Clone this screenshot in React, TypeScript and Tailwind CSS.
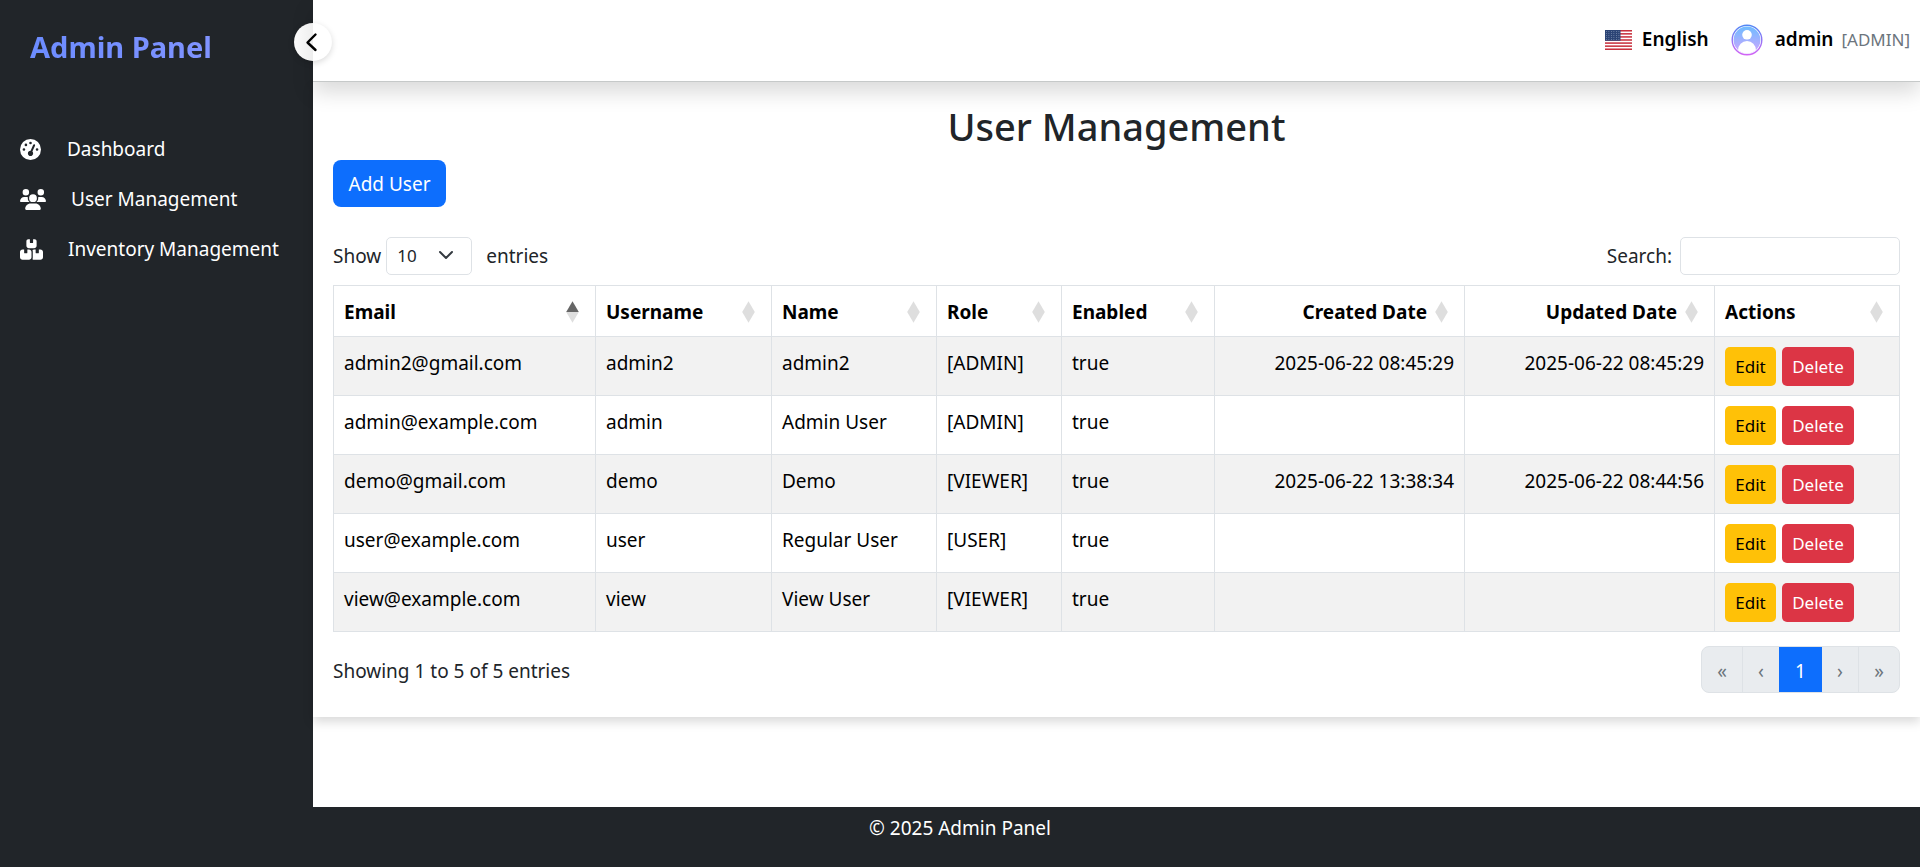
import { useState } from "react";
import { FaGaugeHigh, FaUsers, FaBoxesStacked } from "react-icons/fa6";

// ─── Types & data ───────────────────────────────────────────────────────────
interface User {
  email: string;
  username: string;
  name: string;
  role: string;
  enabled: boolean;
  created: string;
  updated: string;
}

const USERS: User[] = [
  { email: "admin2@gmail.com", username: "admin2", name: "admin2", role: "ADMIN", enabled: true, created: "2025-06-22 08:45:29", updated: "2025-06-22 08:45:29" },
  { email: "admin@example.com", username: "admin", name: "Admin User", role: "ADMIN", enabled: true, created: "", updated: "" },
  { email: "demo@gmail.com", username: "demo", name: "Demo", role: "VIEWER", enabled: true, created: "2025-06-22 13:38:34", updated: "2025-06-22 08:44:56" },
  { email: "user@example.com", username: "user", name: "Regular User", role: "USER", enabled: true, created: "", updated: "" },
  { email: "view@example.com", username: "view", name: "View User", role: "VIEWER", enabled: true, created: "", updated: "" },
];

const COLUMNS = [
  { label: "Email", width: "w-[262px]" },
  { label: "Username", width: "w-[176px]" },
  { label: "Name", width: "w-[165px]" },
  { label: "Role", width: "w-[125px]" },
  { label: "Enabled", width: "w-[153px]" },
  { label: "Created Date", width: "w-[250px]", right: true },
  { label: "Updated Date", width: "w-[250px]", right: true },
  { label: "Actions", width: "w-[185px]" },
];

// ─── Drawings ───────────────────────────────────────────────────────────────
function UsFlag() {
  return (
    <svg viewBox="0 0 27 20" className="h-5 w-[27px]" aria-hidden="true">
      <rect width="27" height="20" fill="#fff" />
      {[0, 1, 2, 3, 4, 5, 6].map((i) => (
        <rect key={i} y={(i * 40) / 13} width="27" height={20 / 13} fill="#c8313e" />
      ))}
      <rect width="15.5" height="10.77" fill="#2b4475" />
      {[0, 1, 2, 3, 4].map((r) =>
        [0, 1, 2, 3, 4, 5].map((c) => (
          <circle key={`${r}-${c}`} cx={1.4 + c * 2.5} cy={1.4 + r * 2} r="0.45" fill="#b4c1d8" />
        )),
      )}
    </svg>
  );
}

function Avatar() {
  return (
    <svg viewBox="0 0 32 32" className="size-8" aria-hidden="true">
      <defs>
        <linearGradient id="ring" x1="0" y1="0" x2="0" y2="1">
          <stop offset="0" stopColor="#5187f5" />
          <stop offset="1" stopColor="#d264f5" />
        </linearGradient>
        <linearGradient id="fill" x1="0" y1="0" x2="0" y2="1">
          <stop offset="0" stopColor="#6fbcff" />
          <stop offset="1" stopColor="#d0a5ff" />
        </linearGradient>
        <clipPath id="disc">
          <circle cx="16" cy="16" r="13.4" />
        </clipPath>
      </defs>
      <circle cx="16" cy="16" r="14.8" fill="#fff" stroke="url(#ring)" strokeWidth="1.4" />
      <circle cx="16" cy="16" r="13.4" fill="url(#fill)" />
      <g clipPath="url(#disc)" fill="#fff">
        <circle cx="16" cy="10.8" r="4.8" />
        <path d="M7 32v-5.5a9 9.5 0 0 1 18 0v5.5z" />
      </g>
    </svg>
  );
}

function SortIcon({ active }: { active?: boolean }) {
  return (
    <svg viewBox="0 0 13 22" className="h-[22px] w-[13px] shrink-0" aria-hidden="true">
      <path d="M0.2 11L6.5 0.2L12.8 11z" fill={active ? "#666" : "#dedede"} />
      <path d="M0.2 11L6.5 21.8L12.8 11z" fill="#dedede" />
    </svg>
  );
}

// ─── Layout parts ───────────────────────────────────────────────────────────
function Sidebar() {
  const link = "flex h-[50px] items-center px-5 text-white";
  return (
    <aside className="w-[313px] shrink-0 bg-[#212529]">
      <div className="px-[30px] pt-[26px] pb-14">
        <span className="inline-block bg-linear-to-r from-[#6c8cff] to-[#8093ff] bg-clip-text text-[29px] leading-[42px] font-bold text-transparent">
          Admin Panel
        </span>
      </div>
      <nav className="text-[19px]">
        <a href="#dashboard" className={link}>
          <FaGaugeHigh className="mr-[26px] size-[21px]" />
          Dashboard
        </a>
        <a href="#users" className={link}>
          <FaUsers className="mr-[25px] h-[21px] w-[26px]" />
          User Management
        </a>
        <a href="#inventory" className={link}>
          <FaBoxesStacked className="mr-[25px] h-[21px] w-[23px]" />
          Inventory Management
        </a>
      </nav>
    </aside>
  );
}

function Header() {
  return (
    <header className="relative z-10 flex h-[82px] items-center justify-end border-b border-[#c6c9c9] bg-white pr-2.5 pb-0.5 text-[19px] shadow-[0_10px_20px_rgba(0,0,0,0.15)]">
      <button
        type="button"
        aria-label="Collapse sidebar"
        className="absolute top-[23px] -left-[19px] flex size-[38px] items-center justify-center rounded-full bg-white bg-linear-to-r from-[#fcfcfc] from-0% via-[#eeeeee] via-50% to-white to-50% shadow-[0_2px_6px_rgba(0,0,0,0.15)]"
      >
        <svg viewBox="0 0 20 20" className="size-5" fill="none" stroke="#000" strokeWidth="2.4" strokeLinecap="round" strokeLinejoin="round" aria-hidden="true">
          <path d="M12.5 2.5L4.5 10.5L12.5 18" />
        </svg>
      </button>
      <button type="button" className="flex items-center gap-2.5 font-semibold text-black">
        <UsFlag />
        English
      </button>
      <button type="button" className="ml-[22px] flex items-center font-semibold text-black">
        <Avatar />
        <span className="ml-3">admin</span>
        <span className="ml-2 text-[17px] font-normal text-[#6c757d]">[ADMIN]</span>
      </button>
    </header>
  );
}

function UserTable({ users }: { users: User[] }) {
  const cell = "border border-[#dee2e6] px-2.5 pt-2.5 pb-[9px]";
  return (
    <table className="w-full table-fixed border-collapse text-[19px] leading-8 text-black">
      <colgroup>
        {COLUMNS.map((c) => (
          <col key={c.label} className={c.width} />
        ))}
      </colgroup>
      <thead>
        <tr>
          {COLUMNS.map((c, i) => (
            <th key={c.label} className="border border-[#dee2e6] pt-2.5 pr-4 pb-2 pl-2.5 font-bold">
              <div className={`flex items-center ${c.right ? "justify-end gap-2" : "justify-between"}`}>
                {c.label}
                <SortIcon active={i === 0} />
              </div>
            </th>
          ))}
        </tr>
      </thead>
      <tbody>
        {users.map((u) => (
          <tr key={u.email} className="align-top odd:bg-[#f2f2f2]">
            <td className={cell}>{u.email}</td>
            <td className={cell}>{u.username}</td>
            <td className={cell}>{u.name}</td>
            <td className={cell}>[{u.role}]</td>
            <td className={cell}>{String(u.enabled)}</td>
            <td className={`${cell} text-right`}>{u.created}</td>
            <td className={`${cell} text-right`}>{u.updated}</td>
            <td className={cell}>
              <div className="flex gap-1.5 text-[17px]">
                <button type="button" className="h-[39px] w-[51px] rounded-[5px] bg-[#ffc107] text-black">
                  Edit
                </button>
                <button type="button" className="h-[39px] w-[72px] rounded-[5px] bg-[#dc3545] text-white">
                  Delete
                </button>
              </div>
            </td>
          </tr>
        ))}
      </tbody>
    </table>
  );
}

function Pagination() {
  const item = "pt-1 border-[#dee2e6]";
  return (
    <nav aria-label="Pages" className="flex h-[47px] overflow-hidden rounded-[8px] border border-[#dee2e6] bg-[#e9ecef] text-[19px] text-[#6c757d]">
      <button type="button" className={`w-[41px] border-r ${item}`}>«</button>
      <button type="button" className={`w-9 ${item}`}>‹</button>
      <button type="button" className="-my-px w-[43px] bg-[#0d6efd] pt-1 text-white">1</button>
      <button type="button" className={`w-[37px] border-r ${item}`}>›</button>
      <button type="button" className={`w-10 ${item}`}>»</button>
    </nav>
  );
}

export default function App() {
  const [search, setSearch] = useState("");
  const users = USERS.filter((u) => u.email.includes(search));

  return (
    <div className="flex min-h-screen flex-col bg-white font-['Noto_Sans','Open_Sans',sans-serif] text-[#212529]">
      <div className="flex flex-1">
        <Sidebar />
        <div className="min-w-0 flex-1">
          <Header />
          <main className="px-5 pt-5 pb-6 text-[19px] shadow-[0_5px_10px_rgba(0,0,0,0.15)]">
            <h2 className="mb-2.5 text-center text-[38px] leading-[48px] font-medium">User Management</h2>
            <button type="button" className="h-[47px] w-[113px] rounded-[8px] bg-[#0d6efd] pt-0.5 text-white">
              Add User
            </button>

            {/* ── Length and filter controls ── */}
            <div className="mt-[30px] mb-2.5 flex items-center justify-between">
              <label className="flex items-center">
                Show
                <span className="relative mr-3.5 ml-[5px]">
                  <select className="h-[38px] w-[86px] appearance-none rounded-[5px] border border-[#dee2e6] bg-white pl-2.5 text-[17px]">
                    <option>10</option>
                    <option>25</option>
                    <option>50</option>
                    <option>100</option>
                  </select>
                  <svg viewBox="0 0 16 16" className="pointer-events-none absolute top-2.5 right-[18px] size-4" fill="none" stroke="#343a40" strokeWidth="2" strokeLinecap="round" strokeLinejoin="round" aria-hidden="true">
                    <path d="M2 5l6 6 6-6" />
                  </svg>
                </span>
                entries
              </label>
              <label className="flex items-center gap-2">
                Search:
                <input
                  type="search"
                  value={search}
                  onChange={(e) => setSearch(e.target.value)}
                  className="h-[38px] w-[220px] rounded-[5px] border border-[#dee2e6] px-2.5 text-[17px]"
                />
              </label>
            </div>

            <UserTable users={users} />

            <div className="mt-3.5 flex items-center justify-between">
              <span className="pt-1">Showing 1 to {users.length} of {users.length} entries</span>
              <Pagination />
            </div>
          </main>
        </div>
      </div>
      <footer className="h-[60px] bg-[#212529] pt-1.5 text-center text-[19px] leading-[30px] text-white">
        © 2025 Admin Panel
      </footer>
    </div>
  );
}
